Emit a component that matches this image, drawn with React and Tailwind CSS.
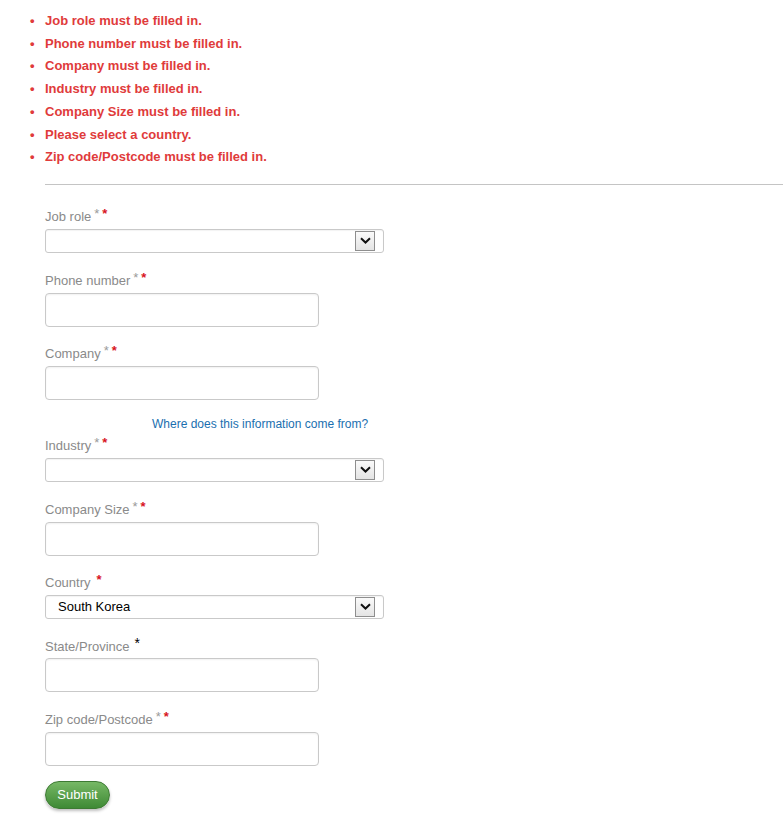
const errors = [
  'Job role must be filled in.',
  'Phone number must be filled in.',
  'Company must be filled in.',
  'Industry must be filled in.',
  'Company Size must be filled in.',
  'Please select a country.',
  'Zip code/Postcode must be filled in.',
];

const Stars = ({ gray = true, red = true, black = false }) => (
  <span className="relative -top-[3px] ml-[3px] text-[13px]">
    {gray && <span className="text-[#9a9a9a]">*</span>}
    {red && <span className="ml-[3px] font-bold text-[#d8141e]">*</span>}
    {black && <span className="ml-[2px] text-[14px] text-black">*</span>}
  </span>
);

const Label = ({ children, ...stars }) => (
  <div className="h-4 text-[13px] leading-4 text-[#8a8a8a]">
    {children}
    <Stars {...stars} />
  </div>
);

const Select = ({ value }) => (
  <div className="mt-1 flex h-6 w-[339px] items-center rounded-[3px] border border-[#c9c9c9] bg-white pr-[8px] shadow-[inset_0_1px_1px_rgba(0,0,0,0.05)]">
    <span className="flex-1 pl-[12px] text-[13px] text-black">{value}</span>
    <span className="flex h-5 w-5 items-center justify-center border border-[#8e8e8e] bg-gradient-to-b from-[#fafafa] to-[#e4e4e4]">
      <svg width="11" height="7" viewBox="0 0 11 7">
        <path d="M1 1.2 L5.5 5.5 L10 1.2" fill="none" stroke="#111" strokeWidth="2" />
      </svg>
    </span>
  </div>
);

const Input = () => (
  <div className="mt-1 h-[34px] w-[274px] rounded-[4px] border border-[#c9c9c9] bg-white shadow-[inset_0_1px_2px_rgba(0,0,0,0.06)]" />
);

export default function App() {
  return (
    <div className="min-h-[840px] bg-white font-['Liberation_Sans',Arial,sans-serif]">
      <ul className="pt-[10px] pl-[30px] text-[13px] font-bold leading-[22.7px] text-[#e03b3b]">
        {errors.map((e) => (
          <li key={e} className="flex">
            <span className="w-[15px]">•</span>
            <span>{e}</span>
          </li>
        ))}
      </ul>

      <div className="mt-[15px] ml-[45px] border-t border-[#c4c4c4]" />

      <form className="pl-[45px] pt-[24px]">
        <Label>Job role</Label>
        <Select />

        <div className="mt-[20px]">
          <Label>Phone number</Label>
          <Input />
        </div>

        <div className="mt-[19px]">
          <Label>Company</Label>
          <Input />
        </div>

        <div className="mt-[16px] pl-[107px] text-[12px] leading-4 text-[#1a6faf]">
          Where does this information come from?
        </div>

        <div className="mt-[6px]">
          <Label>Industry</Label>
          <Select />
        </div>

        <div className="mt-[20px]">
          <Label>Company Size</Label>
          <Input />
        </div>

        <div className="mt-[19px]">
          <Label gray={false}>Country</Label>
          <Select value="South Korea" />
        </div>

        <div className="mt-[19px]">
          <Label gray={false} red={false} black>State/Province</Label>
          <Input />
        </div>

        <div className="mt-[20px]">
          <Label>Zip code/Postcode</Label>
          <Input />
        </div>

        <button
          type="button"
          className="mt-[15px] h-7 w-[65px] rounded-full border border-[#3d7a33] bg-gradient-to-b from-[#76b865] to-[#3e8a35] text-[13px] text-white shadow-[0_2px_3px_rgba(0,0,0,0.25)]"
        >
          Submit
        </button>
      </form>
    </div>
  );
}
